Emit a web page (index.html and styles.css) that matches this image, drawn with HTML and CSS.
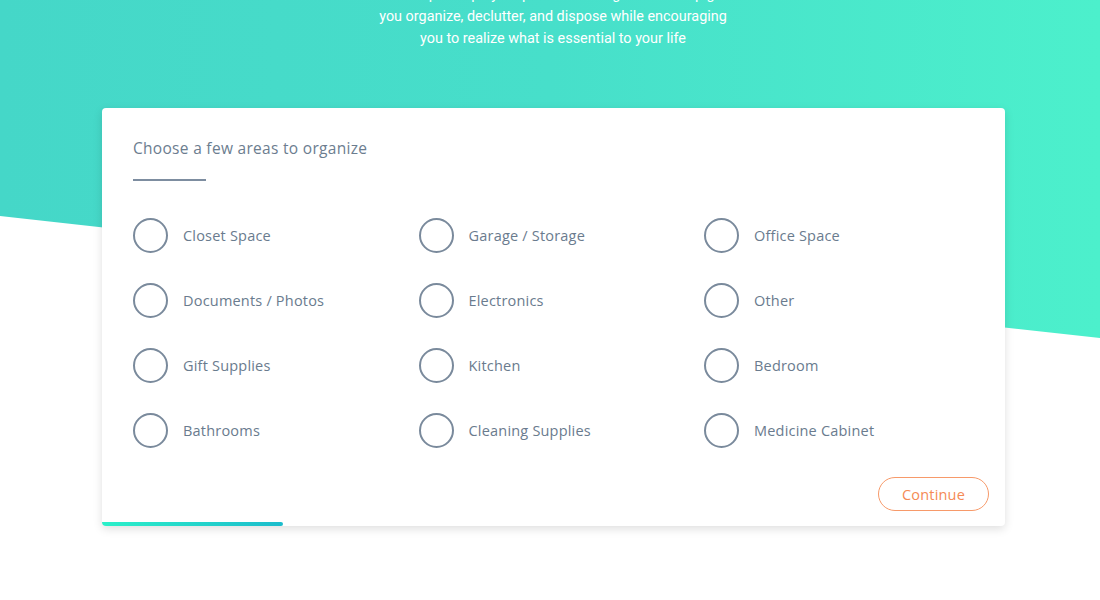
FILE: index.html
```html
<!DOCTYPE html>
<html lang="en">
<head>
<meta charset="utf-8">
<title>Choose areas to organize</title>
<link rel="stylesheet" href="styles.css">
</head>
<body>
<div class="hero-bg"></div>
<main class="page">
  <p class="intro">
    <span class="line">Our simple step-by-step minimalism guide will help get</span>
    <span class="line">you organize, declutter, and dispose while encouraging</span>
    <span class="line">you to realize what is essential to your life</span>
  </p>
  <section class="card">
    <h2 class="title">Choose a few areas to organize</h2>
    <div class="rule"></div>
    <ul class="options">
      <li class="option"><span class="radio"></span><span class="label">Closet Space</span></li>
      <li class="option"><span class="radio"></span><span class="label">Garage / Storage</span></li>
      <li class="option"><span class="radio"></span><span class="label">Office Space</span></li>
      <li class="option"><span class="radio"></span><span class="label">Documents / Photos</span></li>
      <li class="option"><span class="radio"></span><span class="label">Electronics</span></li>
      <li class="option"><span class="radio"></span><span class="label">Other</span></li>
      <li class="option"><span class="radio"></span><span class="label">Gift Supplies</span></li>
      <li class="option"><span class="radio"></span><span class="label">Kitchen</span></li>
      <li class="option"><span class="radio"></span><span class="label">Bedroom</span></li>
      <li class="option"><span class="radio"></span><span class="label">Bathrooms</span></li>
      <li class="option"><span class="radio"></span><span class="label">Cleaning Supplies</span></li>
      <li class="option"><span class="radio"></span><span class="label">Medicine Cabinet</span></li>
    </ul>
    <div class="actions">
      <button class="continue" type="button">Continue</button>
    </div>
    <div class="progress"><div class="progress-fill" style="width: 20%"></div></div>
  </section>
</main>
</body>
</html>
```
FILE: styles.css
```css
* { box-sizing: border-box; }
html, body { margin: 0; padding: 0; }
body {
  background: #ffffff;
  font-family: "Open Sans", "Noto Sans", sans-serif;
  overflow: hidden;
  height: 600px;
  position: relative;
}
.hero-bg {
  position: absolute;
  left: 0; top: 0;
  width: 1100px;
  height: 340px;
  background: linear-gradient(90deg, #45d7c8 0%, #47dfca 50%, #4cf0cc 100%);
  clip-path: polygon(0 0, 100% 0, 100% 338px, 0 216px);
  z-index: 0;
}
.page {
  position: relative;
  z-index: 1;
  display: flex;
  flex-direction: column;
  align-items: center;
}
.intro {
  margin: -16px 0 0 0;
  font-family: Roboto, "Liberation Sans", sans-serif;
  font-size: 14.4px;
  line-height: 22px;
  color: #ffffff;
  text-align: center;
  display: flex;
  flex-direction: column;
  align-items: center;
  transform: translateX(3px);
}
.line { display: block; white-space: nowrap; }
.card {
  margin-top: 58px;
  margin-left: 7px;
  width: 903px;
  height: 418px;
  background: #ffffff;
  border-radius: 4px;
  box-shadow: 0 3px 10px rgba(0, 0, 0, 0.13);
  padding: 29px 16px 0 31px;
  display: flex;
  flex-direction: column;
  position: relative;
  overflow: hidden;
}
.title {
  margin: 0;
  font-size: 15.5px;
  font-weight: 400;
  color: #6c7d8f;
  line-height: 22px;
  letter-spacing: 0.3px;
}
.rule {
  margin-top: 20px;
  width: 73px;
  height: 2px;
  background: #7d8da0;
}
.options {
  list-style: none;
  margin: 37px 0 0 0;
  padding: 0;
  display: grid;
  grid-template-columns: repeat(3, 285.5px);
  row-gap: 31px;
}
.option {
  display: flex;
  align-items: center;
  gap: 15px;
  height: 34px;
}
.radio {
  width: 35px;
  height: 35px;
  border: 2px solid #7a8a9c;
  border-radius: 50%;
  flex: none;
}
.label {
  font-size: 14.5px;
  color: #6a7b8e;
  letter-spacing: 0.2px;
}
.actions {
  margin-top: 30px;
  display: flex;
  justify-content: flex-end;
}
.continue {
  width: 111px;
  height: 34px;
  border: 1px solid #f79a6a;
  border-radius: 17px;
  background: #ffffff;
  color: #f58a55;
  font-family: "Open Sans", "Noto Sans", sans-serif;
  font-size: 14.5px;
  letter-spacing: 0.2px;
  padding: 0;
  cursor: pointer;
}
.progress {
  position: absolute;
  left: 0;
  bottom: 0;
  width: 100%;
  height: 4px;
}
.progress-fill {
  height: 4px;
  border-radius: 0 2px 2px 0;
  background: linear-gradient(90deg, #2bf0c9 0%, #1bbccc 100%);
}
```
